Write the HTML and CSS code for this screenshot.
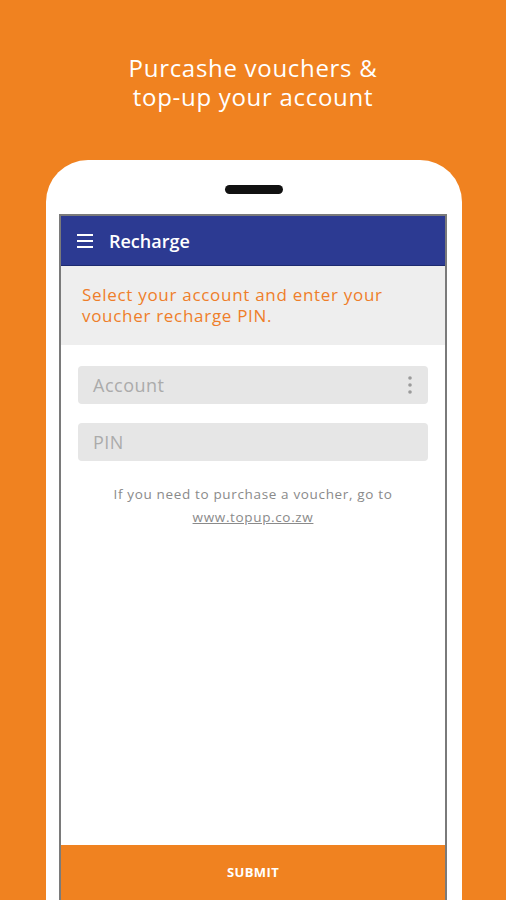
FILE: index.html
```html
<!DOCTYPE html>
<html lang="en">
<head>
  <meta charset="UTF-8">
  <meta content="width=device-width, initial-scale=1.0" name="viewport">
  <title>Recharge</title>
  <link rel="stylesheet" href="styles.css">
</head>
<body>
<header class="promo">
  <h1>Purcashe vouchers &amp;<br>top-up your account</h1>
</header>
<main class="phone">
  <div class="speaker"></div>
  <section class="screen">
    <div class="appbar">
      <svg class="menu-icon" width="16" height="14" viewBox="0 0 16 14">
        <rect x="0" y="0" width="16" height="2"/>
        <rect x="0" y="6" width="16" height="2"/>
        <rect x="0" y="12" width="16" height="2"/>
      </svg>
      <span class="appbar-title">Recharge</span>
    </div>
    <p class="intro">Select your account and enter your voucher recharge PIN.</p>
    <form class="fields">
      <div class="field">
        <span class="placeholder">Account</span>
        <svg class="kebab" width="4" height="18" viewBox="0 0 4 18">
          <circle cx="2" cy="2" r="1.8"/>
          <circle cx="2" cy="9" r="1.8"/>
          <circle cx="2" cy="16" r="1.8"/>
        </svg>
      </div>
      <div class="field">
        <span class="placeholder">PIN</span>
      </div>
    </form>
    <p class="hint">If you need to purchase a voucher, go to<br><a href="#">www.topup.co.zw</a></p>
    <button class="submit" type="button">SUBMIT</button>
  </section>
</main>
</body>
</html>
```
FILE: styles.css
```css
* {
  box-sizing: border-box;
}

html,
body {
  margin: 0;
  height: 900px;
  overflow: hidden;
}

body {
  background: #f08220;
  font-family: "Open Sans", sans-serif;
}

.promo {
  padding-top: 53px;
  height: 160px;

  & h1 {
    margin: 0;
    color: #fff;
    font-size: 24px;
    font-weight: 400;
    line-height: 29px;
    text-align: center;
    letter-spacing: 0.7px;
  }
}

.phone {
  background: #fff;
  border-radius: 42px 42px 0 0;
  height: 740px;
  margin-left: 46px;
  width: 416px;
  padding: 25px 15px 0 13px;
}

.speaker {
  background: #111;
  border-radius: 5px;
  height: 9px;
  margin: 0 auto 20px;
  width: 58px;
  position: relative;
  left: 1px;
}

.screen {
  border: 2px solid #7a7a7a;
  border-bottom: none;
  display: flex;
  flex-direction: column;
  height: 688px;
}

.appbar {
  align-items: center;
  background: #2c3a92;
  border-bottom: 1px solid #1d2a70;
  color: #fff;
  display: flex;
  gap: 16px;
  height: 50px;
  padding-left: 16px;

  & .menu-icon {
    fill: #fff;
  }

  & .appbar-title {
    font-size: 18px;
    font-weight: 600;
    letter-spacing: 0;
  }
}

.intro {
  background: #eeeeee;
  color: #ee7e2a;
  font-size: 17px;
  line-height: 21px;
  letter-spacing: 0.7px;
  margin: 0;
  height: 79px;
  padding: 18px 30px 0 21px;
}

.fields {
  display: flex;
  flex-direction: column;
  gap: 19px;
  padding: 21px 17px 0;
}

.field {
  align-items: center;
  background: #e6e6e6;
  border-radius: 4px;
  display: flex;
  height: 38px;
  justify-content: space-between;
  padding: 0 16px 0 15px;

  & .placeholder {
    color: #ababab;
    font-size: 18px;
    letter-spacing: 0.5px;
  }

  & .kebab {
    fill: #9a9a9a;
  }
}

.hint {
  color: #8a8a8a;
  font-size: 13.5px;
  line-height: 23px;
  margin: 22px 0 0;
  text-align: center;
  letter-spacing: 0.65px;

  & a {
    color: #8a8a8a;
    text-decoration: underline;
  }
}

.submit {
  background: #f08220;
  border: none;
  border-bottom: 2px solid #8a8a8a;
  color: #fff;
  font-family: inherit;
  font-size: 13px;
  font-weight: 700;
  height: 57px;
  letter-spacing: 0.4px;
  margin-top: auto;
  margin-bottom: 0;
  padding: 0 0 2px;
}
```
